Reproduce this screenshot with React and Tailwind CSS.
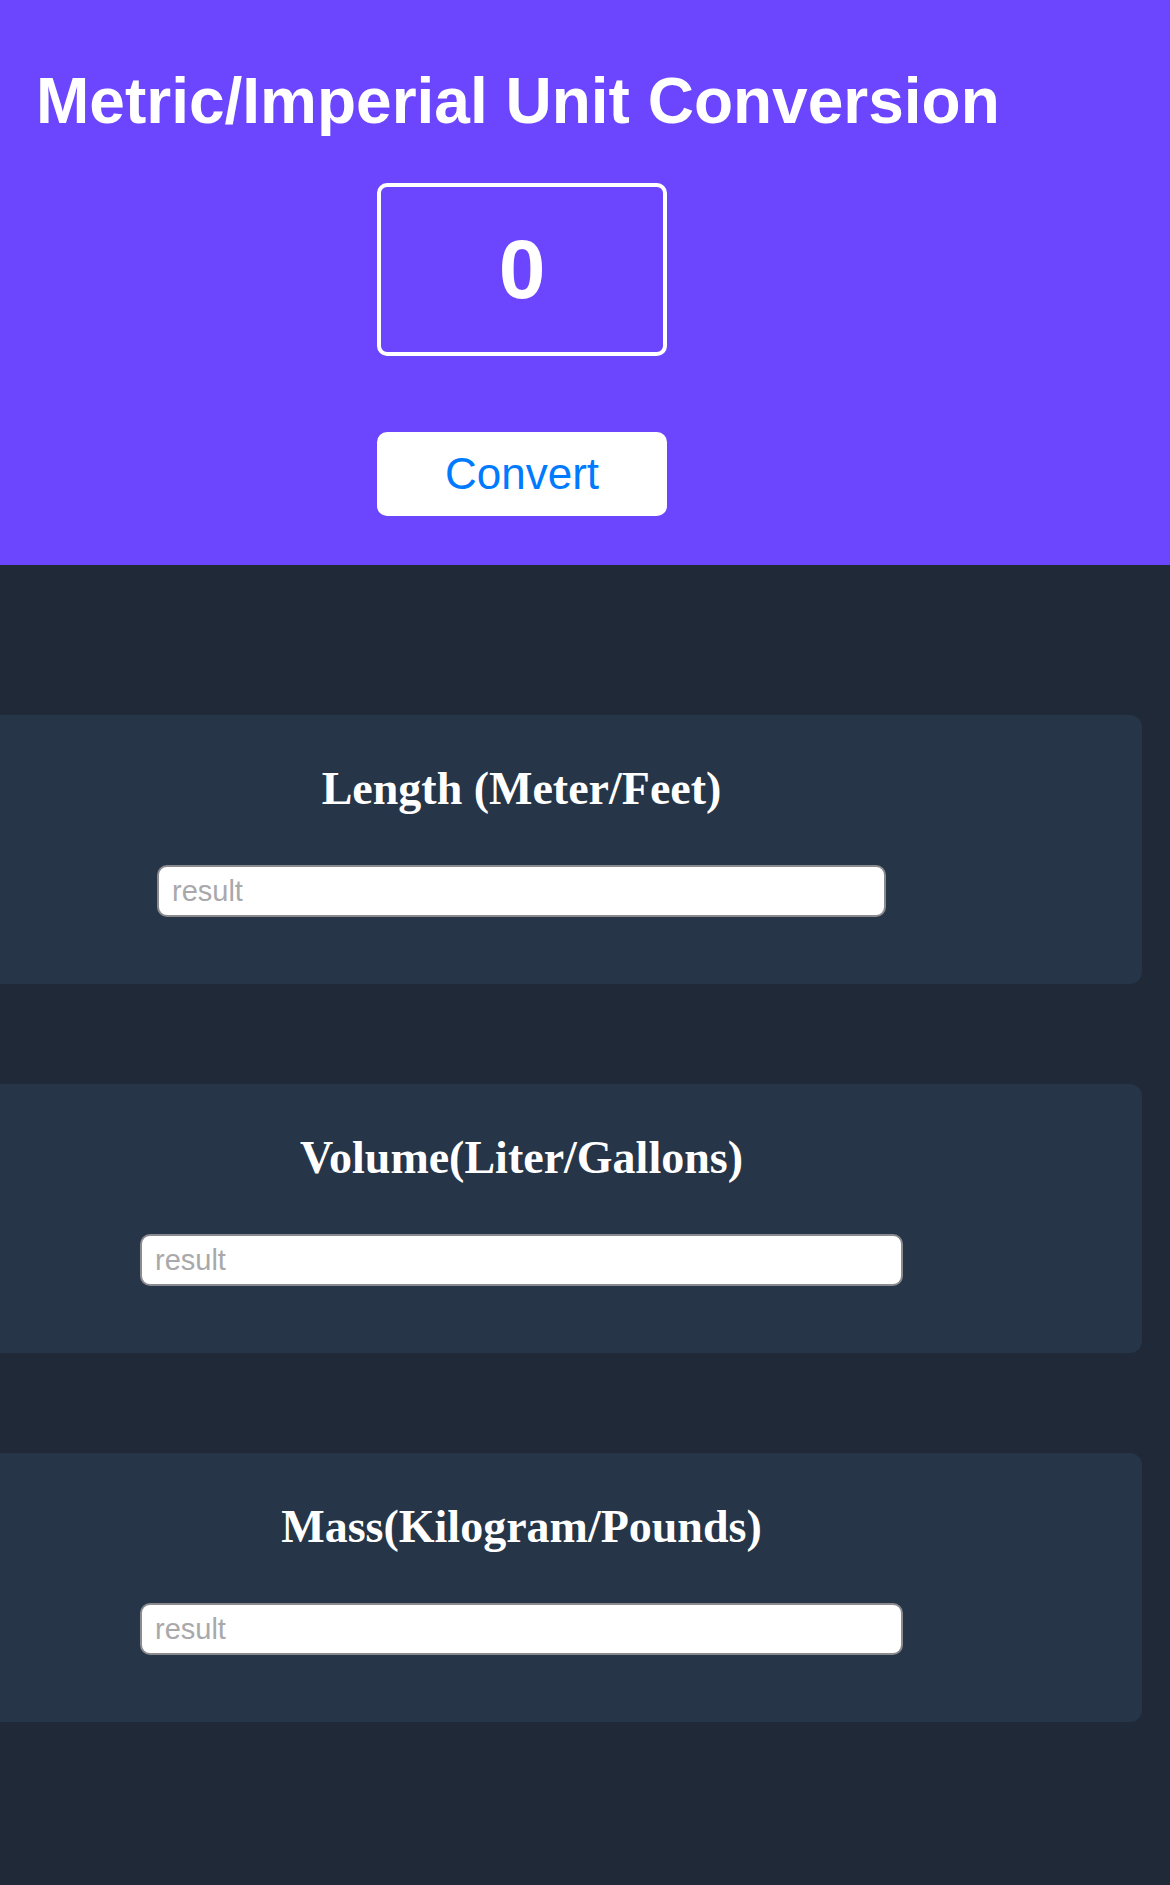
import { useState } from "react";

const sections = [
  { title: "Length (Meter/Feet)", inputWidth: "w-[729px]" },
  { title: "Volume(Liter/Gallons)", inputWidth: "w-[763px]" },
  { title: "Mass(Kilogram/Pounds)", inputWidth: "w-[763px]" },
];

function ResultCard({ title, inputWidth }) {
  return (
    <div className="-ml-[99px] w-[1241px] h-[269px] bg-[#263548] rounded-[12px] pt-[51px] flex flex-col items-center">
      <h2 className="font-['Liberation_Serif',serif] font-bold text-[46px] leading-[46px] text-white">
        {title}
      </h2>
      {/* read-only result field */}
      <input
        type="text"
        readOnly
        placeholder="result"
        className={`${inputWidth} mt-[53px] h-[52px] bg-white border-2 border-[#8a8a8f] rounded-[10px] px-[13px] text-[29px] font-['Liberation_Sans',sans-serif] text-black placeholder:text-[#a9a9ab] outline-none`}
      />
    </div>
  );
}

export default function App() {
  const [value, setValue] = useState("0");

  return (
    <div className="min-h-[1885px] bg-[#1f2937] font-['Liberation_Sans',Arial,sans-serif] overflow-hidden">
      <header className="h-[565px] bg-[#6c45ff] pt-[69px]">
        <h1 className="pl-[36px] text-[64px] leading-[64px] font-bold text-white">
          Metric/Imperial Unit Conversion
        </h1>
        <div className="w-[1044px] flex flex-col items-center">
          <input
            type="text"
            value={value}
            onChange={(e) => setValue(e.target.value)}
            className="mt-[50px] w-[290px] h-[173px] bg-transparent border-[4px] border-white rounded-[10px] text-center text-white text-[84px] font-bold outline-none"
          />
          <button className="mt-[76px] w-[290px] h-[84px] bg-white rounded-[10px] text-[#007aff] text-[44px]">
            Convert
          </button>
        </div>
      </header>

      <main className="pt-[150px] flex flex-col gap-[100px]">
        {sections.map((s) => (
          <ResultCard key={s.title} title={s.title} inputWidth={s.inputWidth} />
        ))}
      </main>
    </div>
  );
}
